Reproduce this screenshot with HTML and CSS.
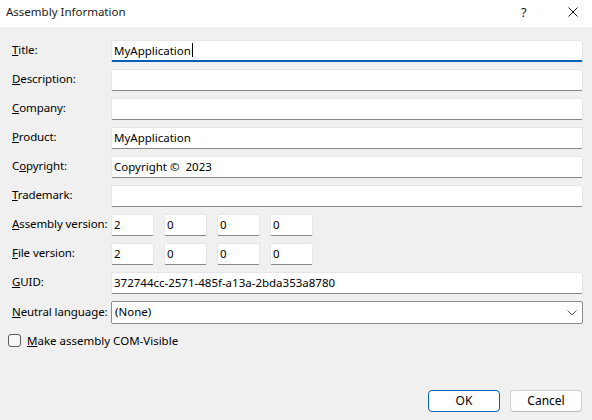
FILE: index.html
```html
<!DOCTYPE html>
<html>
<head>
<meta charset="utf-8">
<title>Assembly Information</title>
<link rel="stylesheet" href="styles.css">
</head>
<body>
<div class="window">
  <div class="titlebar">
    <span class="title">Assembly Information</span>
    <span class="tb-help">?</span>
    <span class="tb-close">
      <svg width="10" height="10" viewBox="0 0 10 10"><path d="M0.5 0.5 L9.5 9.5 M9.5 0.5 L0.5 9.5" stroke="#1a1a1a" stroke-width="1" fill="none"/></svg>
    </span>
  </div>
  <div class="form">
    <label class="lbl"><u>T</u>itle:</label>
    <div class="box focused"><span class="val">MyApplication</span><span class="caret"></span></div>

    <label class="lbl"><u>D</u>escription:</label>
    <div class="box"></div>

    <label class="lbl"><u>C</u>ompany:</label>
    <div class="box"></div>

    <label class="lbl"><u>P</u>roduct:</label>
    <div class="box"><span class="val">MyApplication</span></div>

    <label class="lbl">C<u>o</u>pyright:</label>
    <div class="box"><span class="val">Copyright ©&nbsp; 2023</span></div>

    <label class="lbl"><u>T</u>rademark:</label>
    <div class="box"></div>

    <label class="lbl"><u>A</u>ssembly version:</label>
    <div class="vers">
      <div class="box small"><span class="val">2</span></div>
      <div class="box small"><span class="val">0</span></div>
      <div class="box small"><span class="val">0</span></div>
      <div class="box small"><span class="val">0</span></div>
    </div>

    <label class="lbl"><u>F</u>ile version:</label>
    <div class="vers">
      <div class="box small"><span class="val">2</span></div>
      <div class="box small"><span class="val">0</span></div>
      <div class="box small"><span class="val">0</span></div>
      <div class="box small"><span class="val">0</span></div>
    </div>

    <label class="lbl"><u>G</u>UID:</label>
    <div class="box"><span class="val">372744cc-2571-485f-a13a-2bda353a8780</span></div>

    <label class="lbl"><u>N</u>eutral language:</label>
    <div class="combo"><span class="val">(None)</span>
      <svg class="chev" width="10" height="6" viewBox="0 0 10 6"><path d="M0.5 0.5 L5 5 L9.5 0.5" stroke="#5d5d5d" stroke-width="1" fill="none"/></svg>
    </div>
  </div>
  <div class="check-row">
    <span class="checkbox"></span>
    <span class="check-label"><u>M</u>ake assembly COM-Visible</span>
  </div>
  <div class="footer">
    <button class="btn primary">OK</button>
    <button class="btn">Cancel</button>
  </div>
</div>
</body>
</html>
```
FILE: styles.css
```css
html, body {
  margin: 0;
  padding: 0;
}
body {
  width: 592px;
  height: 420px;
  overflow: hidden;
  font-family: "Noto Sans", "Open Sans", sans-serif;
  font-size: 11.5px;
  color: #000;
}
.window {
  height: 420px;
  display: flex;
  flex-direction: column;
  background: #f0f0f0;
}
.titlebar {
  height: 27px;
  background: #fff;
  display: flex;
  align-items: center;
  padding-left: 6px;
  flex-shrink: 0;
}
.title {
  flex: 1;
  color: #1a1a1a;
  margin-top: -4px;
}
.tb-help {
  width: 10px;
  font-size: 13px;
  color: #1a1a1a;
  margin-right: 37px;
  margin-top: -4px;
}
.tb-close {
  display: flex;
  margin-right: 14px;
  margin-top: -3px;
}
.form {
  display: grid;
  grid-template-columns: 99px 472px;
  row-gap: 7px;
  padding: 13px 0 0 12px;
  align-items: center;
}
.lbl {
  line-height: 20px;
  padding-bottom: 2px;
  white-space: nowrap;
  letter-spacing: -0.1px;
}
.box {
  box-sizing: border-box;
  height: 22px;
  background: #fff;
  border: 1px solid #e6e6e6;
  border-bottom: 1px solid #878787;
  border-radius: 2px;
  display: flex;
  align-items: center;
  padding: 0 0 2px 2px;
  white-space: nowrap;
}
.box.focused {
  border-bottom: 2px solid #005fb8;
  padding-bottom: 1px;
}
.caret {
  display: inline-block;
  width: 1px;
  height: 14px;
  background: #000;
  margin-left: 1px;
}
.vers {
  display: flex;
  gap: 10px;
}
.box.small {
  width: 43px;
}
.combo {
  box-sizing: border-box;
  height: 23px;
  background: #fff;
  border: 1px solid #8d8d8d;
  border-radius: 2px;
  display: flex;
  align-items: center;
  justify-content: space-between;
  padding: 0 5px 2px 3px;
}
.chev {
  display: block;
  margin-top: 2px;
}
.check-row {
  display: flex;
  align-items: center;
  gap: 6px;
  padding: 9px 0 0 8px;
}
.checkbox {
  box-sizing: border-box;
  width: 13px;
  height: 13px;
  border: 1px solid #5b5b5b;
  border-radius: 3px;
  background: #f7f7f7;
}
.footer {
  margin-top: auto;
  display: flex;
  justify-content: flex-end;
  gap: 10px;
  padding: 0 10px 8px 0;
}
.btn {
  box-sizing: border-box;
  width: 72px;
  height: 22px;
  font-family: inherit;
  font-size: 12px;
  color: #000;
  background: #fdfdfd;
  border: 1px solid #d0d0d0;
  border-bottom-color: #bcbcbc;
  border-radius: 4px;
  padding: 0 0 1px 0;
}
.btn.primary {
  border: 1px solid #005fb8;
  background: #fff;
}
```
